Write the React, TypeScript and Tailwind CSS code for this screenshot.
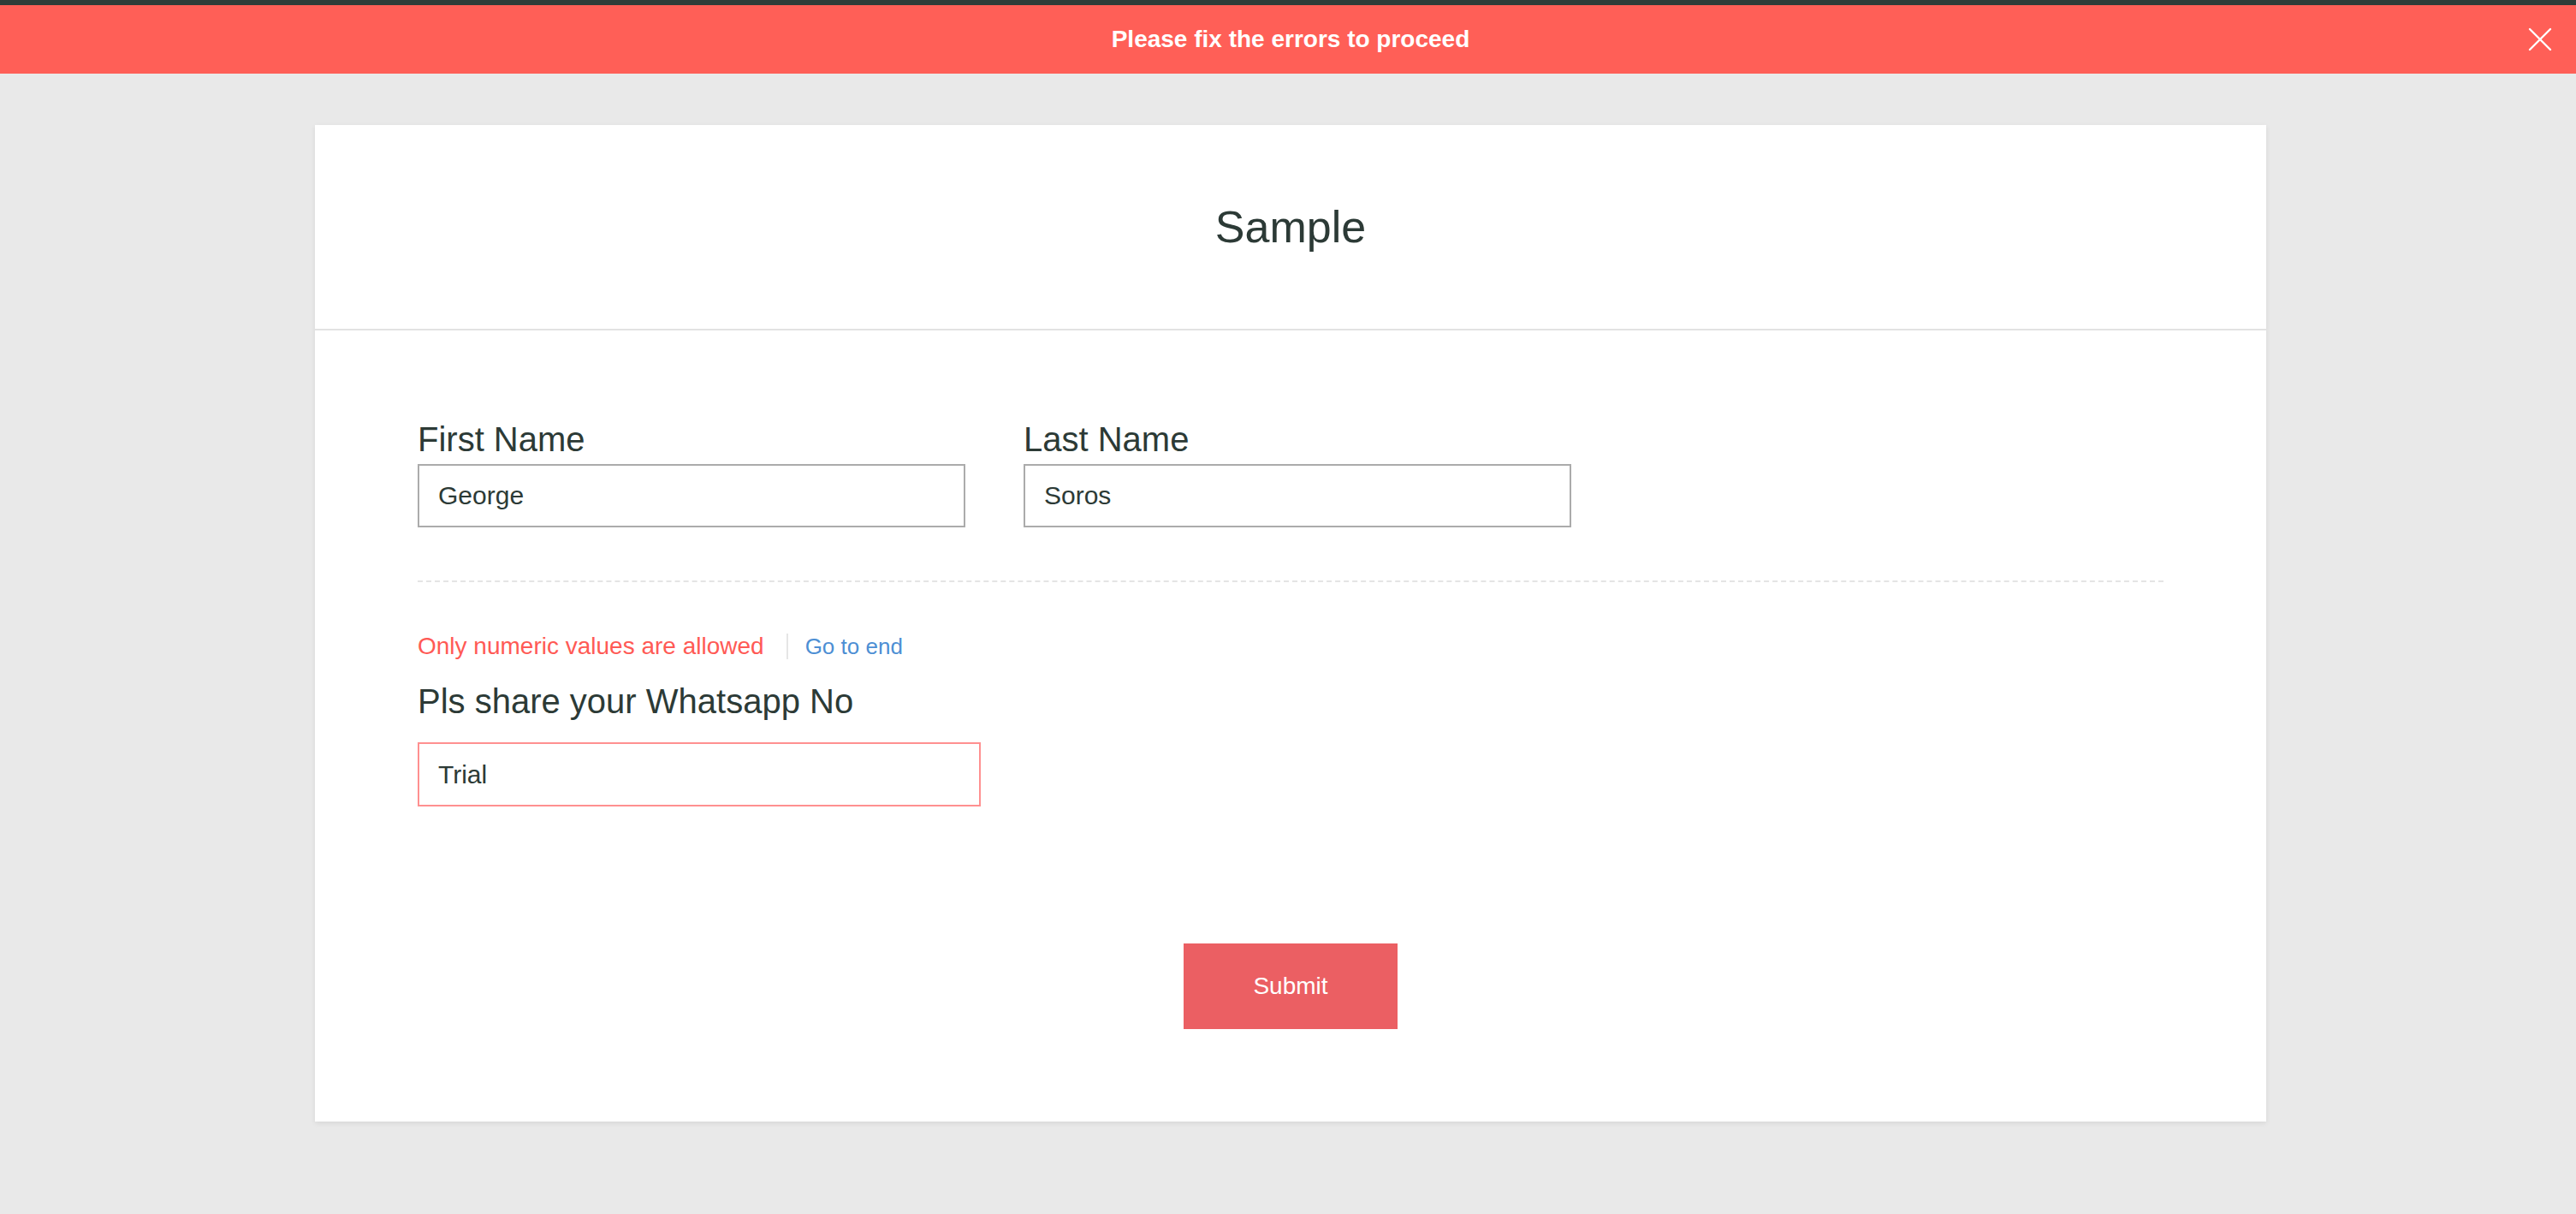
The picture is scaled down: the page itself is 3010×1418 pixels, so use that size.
import { X } from 'lucide-react';

const font = { fontFamily: '"Liberation Sans", Arial, sans-serif' };

function TextField({
  label,
  value,
  width,
}: {
  label: string;
  value: string;
  width: string;
}) {
  return (
    <div className="flex flex-col gap-[6px]">
      <label className="text-[40px] leading-[46px] text-[#2c3a36]">{label}</label>
      <input
        readOnly
        value={value}
        className={`${width} h-[74px] border-2 border-[#ababab] bg-white px-[22px] text-[30px] text-[#2c3a36] outline-none`}
      />
    </div>
  );
}

export default function App() {
  return (
    <div className="min-h-[1418px] bg-[#e9e9e9]" style={font}>
      <div className="h-[6px] bg-[#2f3d39]" />
      <div className="relative flex h-[80px] items-center justify-center bg-[#ff5f57] pl-[6px]">
        <span className="text-[28px] font-bold text-white">
          Please fix the errors to proceed
        </span>
        <button
          type="button"
          className="absolute right-[18px] top-1/2 -translate-y-1/2 text-white"
        >
          <X size={48} strokeWidth={1.2} />
        </button>
      </div>

      <div className="flex justify-center pl-[6px] pt-[60px]">
        <div className="w-[2280px] bg-white shadow-[0_2px_6px_rgba(0,0,0,0.08)]">
          <header className="flex h-[240px] items-center justify-center border-b-2 border-[#e2e2e2]">
            <h1 className="text-[52px] text-[#2c3a36]">Sample</h1>
          </header>

          <form className="flex flex-col px-[120px] pb-[108px] pt-[104px]">
            <div className="flex gap-[68px]">
              <TextField label="First Name" value="George" width="w-[640px]" />
              <TextField label="Last Name" value="Soros" width="w-[640px]" />
            </div>

            <div className="mt-[62px] border-t-2 border-dashed border-[#e4e4e4]" />

            <div className="mt-[60px] flex h-[30px] items-center">
              <span className="text-[28px] leading-[30px] text-[#ff5a55]">
                Only numeric values are allowed
              </span>
              <a
                href="#end"
                className="ml-[26px] border-l-2 border-[#e6e6e6] pl-[20px] text-[26px] leading-[30px] text-[#4d8fd4]"
              >
                Go to end
              </a>
            </div>

            <div className="mt-[26px] flex flex-col gap-[25px]">
              <label className="text-[40px] leading-[46px] text-[#2c3a36]">
                Pls share your Whatsapp No
              </label>
              <input
                readOnly
                value="Trial"
                className="h-[75px] w-[658px] border-2 border-[#ff9090] bg-white px-[22px] text-[30px] text-[#2c3a36] outline-none"
              />
            </div>

            <div className="mt-[160px] flex justify-center" id="end">
              <button
                type="button"
                className="h-[100px] w-[250px] bg-[#eb5f63] text-[28px] text-white"
              >
                Submit
              </button>
            </div>
          </form>
        </div>
      </div>
    </div>
  );
}
